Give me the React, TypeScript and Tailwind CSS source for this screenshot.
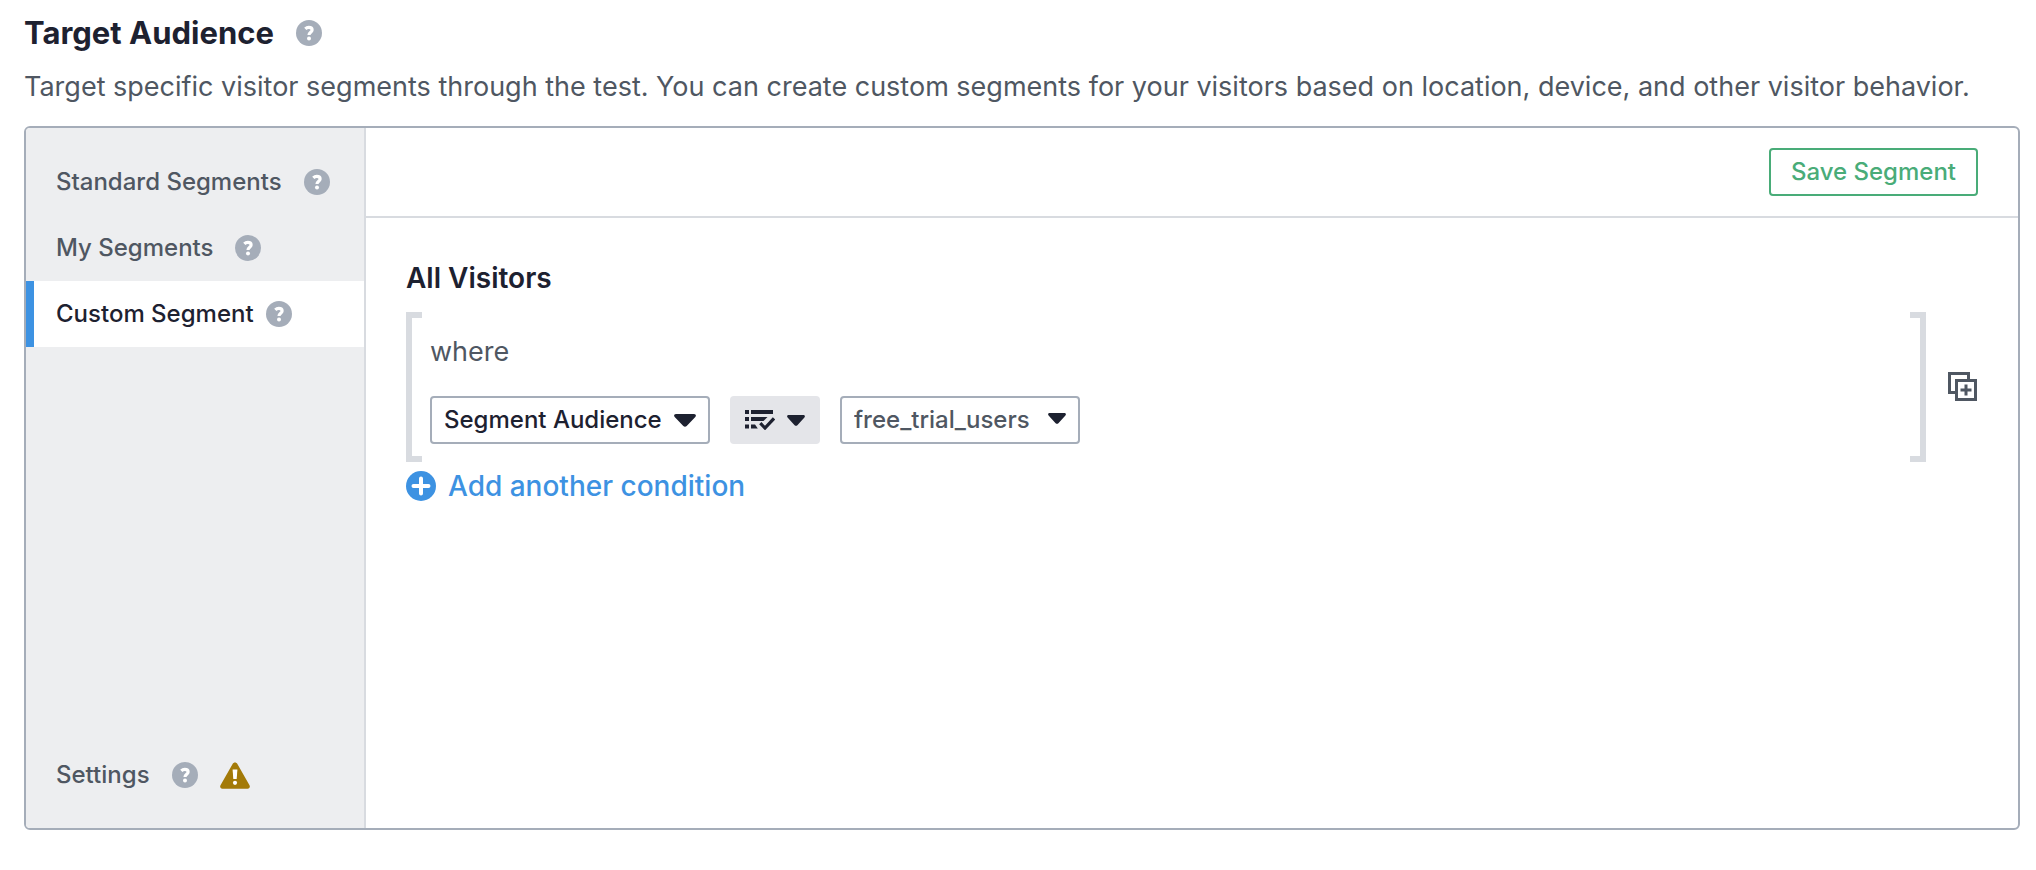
import { useState } from "react";

const tabs = [
  { id: "standard", label: "Standard Segments" },
  { id: "mine", label: "My Segments" },
  { id: "custom", label: "Custom Segment" },
];

function HelpButton({ topic }: { topic: string }) {
  return (
    <button
      type="button"
      aria-label={`Help: ${topic}`}
      className="flex size-[26px] shrink-0 items-center justify-center rounded-full bg-[#a5adb9] text-white"
    >
      <svg viewBox="0 0 26 26" className="size-full" aria-hidden="true">
        <path
          d="M9.3 8.9C10.3 7.9 11.4 7.4 12.8 7.4c2 0 3.3 1 3.3 2.6 0 2.2-3.1 2.3-3.1 5"
          fill="none"
          stroke="currentColor"
          strokeWidth="3.2"
        />
        <circle cx="13" cy="18.4" r="2" fill="currentColor" />
      </svg>
    </button>
  );
}

function Caret({ className }: { className: string }) {
  return (
    <svg
      viewBox="0 0 22 14"
      preserveAspectRatio="none"
      className={className}
      aria-hidden="true"
    >
      <path
        d="M2 0h18c1.8 0 2.5 1.9 1.3 3.1l-8.6 9.8c-1 1.1-2.4 1.1-3.4 0L.7 3.1C-.5 1.9.2 0 2 0Z"
        fill="#1d2130"
      />
    </svg>
  );
}

function ListCheckIcon() {
  return (
    <svg viewBox="0 0 30 20" className="h-5 w-[30px]" aria-hidden="true">
      <g fill="#1d2130">
        <path d="M0 0h4v4H0zM6 0h22v4H6zM0 7h4v4H0zM6 7h16.5l-4 4H6zM0 14.5h4v4H0zM6 14.5h4l2.8 4H6z" />
      </g>
      <path
        d="m15.3 13.2 4.7 4.8 9-9.6"
        fill="none"
        stroke="#1d2130"
        strokeWidth="3.2"
      />
    </svg>
  );
}

function WarningIcon() {
  return (
    <svg
      viewBox="0 0 30 27"
      className="h-[27px] w-[30px]"
      role="img"
      aria-label="Settings need attention"
    >
      <path
        d="M12.6 1.9c1-2 3.8-2 4.8 0l12.1 21.4c.9 1.7 0 3.4-1.9 3.4H2.4c-1.9 0-2.8-1.7-1.9-3.4Z"
        fill="#a37a08"
      />
      <path d="M12.6 7.4h4.8l-.7 9.6h-3.4z" fill="#fff" />
      <circle cx="15" cy="20.8" r="2.1" fill="#fff" />
    </svg>
  );
}

function DuplicateIcon() {
  return (
    <svg viewBox="0 0 30 30" className="size-[30px]" aria-hidden="true">
      <g fill="none" stroke="#4f5762" strokeWidth="3">
        <path d="M20.5 8V1.5h-19v19H8" />
        <path d="M8.5 8.5h19v19h-19z" />
        <path d="M18 12.5v11M12.5 18h11" />
      </g>
    </svg>
  );
}

function PlusCircleIcon() {
  return (
    <svg viewBox="0 0 30 30" className="size-[30px]" aria-hidden="true">
      <circle cx="15" cy="15" r="15" fill="#3d92e2" />
      <path
        d="M15 7.5v15M7.5 15h15"
        stroke="#fff"
        strokeWidth="4"
        strokeLinecap="round"
      />
    </svg>
  );
}

export default function App() {
  const [active, setActive] = useState("custom");

  return (
    <main className="px-6 pt-2 pr-4 pb-10 font-['Inter',sans-serif] text-[#4f5762]">
      <div className="flex items-center gap-[22px]">
        <h1 className="text-[31px] leading-[50px] font-bold text-[#1d2130]">
          Target Audience
        </h1>
        <HelpButton topic="Target Audience" />
      </div>
      <p className="text-[27px] leading-[58px]">
        Target specific visitor segments through the test. You can create custom
        segments for your visitors based on location, device, and other visitor
        behavior.
      </p>

      <section
        aria-label="Target Audience"
        className="mt-[10px] flex min-h-[704px] overflow-hidden rounded-md border-2 border-[#a5adb9]"
      >
        <nav
          aria-label="Segments"
          className="flex w-[340px] shrink-0 flex-col border-r-2 border-[#d8dbe0] bg-[#edeef0] pt-[21px] pb-5 text-2xl font-medium"
        >
          {tabs.map((tab) => (
            <div
              key={tab.id}
              className={`flex h-[66px] items-center border-l-8 pl-[22px] ${
                tab.id === active
                  ? "gap-3 border-[#3d92e2] bg-white text-[#1d2130]"
                  : "gap-[22px] border-transparent"
              }`}
            >
              <button type="button" onClick={() => setActive(tab.id)}>
                {tab.label}
              </button>
              <HelpButton topic={tab.label} />
            </div>
          ))}
          <div className="mt-auto flex h-[66px] items-center gap-[22px] border-l-8 border-transparent pl-[22px]">
            <button type="button">Settings</button>
            <HelpButton topic="Settings" />
            <WarningIcon />
          </div>
        </nav>

        <div className="min-w-0 flex-1">
          <div className="flex justify-end border-b-2 border-[#d8dbe0] px-10 py-5">
            <button
              type="button"
              className="h-12 rounded border-2 border-[#49ac78] px-5 text-2xl font-medium text-[#49ac78]"
            >
              Save Segment
            </button>
          </div>

          <div className="px-10 py-10">
            <h2 className="text-[28px] leading-10 font-semibold text-[#1d2130]">
              All Visitors
            </h2>

            <div className="mt-[14px] flex items-center gap-[22px]">
              <div className="flex min-w-0 flex-1">
                <div className="w-4 shrink-0 border-6 border-r-0 border-[#d8dbe0]" />
                <div className="flex-1 px-2 py-[18px]">
                  <p className="text-[27px] leading-[44px]">where</p>
                  <div className="mt-[22px] flex gap-5">
                    <div className="relative">
                      <select
                        aria-label="Attribute"
                        className="h-12 appearance-none rounded border-2 border-[#a5adb9] bg-white pr-[46px] pl-3 text-2xl font-medium text-[#1d2130]"
                      >
                        <option>Segment Audience</option>
                      </select>
                      <Caret className="pointer-events-none absolute top-[18px] right-[14px] h-[13px] w-[22px]" />
                    </div>
                    <button
                      type="button"
                      aria-label="Operator: is in list"
                      aria-haspopup="listbox"
                      className="flex h-12 items-center gap-3 rounded bg-[#e4e5e9] px-[15px]"
                    >
                      <ListCheckIcon />
                      <Caret className="h-[11px] w-[18px]" />
                    </button>
                    <div className="relative">
                      <select
                        aria-label="Value"
                        className="h-12 appearance-none rounded border-2 border-[#a5adb9] bg-white pr-12 pl-3 text-2xl font-medium text-[#4f5762]"
                      >
                        <option>free_trial_users</option>
                      </select>
                      <Caret className="pointer-events-none absolute top-[17px] right-[14px] h-[11px] w-[18px]" />
                    </div>
                  </div>
                </div>
                <div className="w-4 shrink-0 border-6 border-l-0 border-[#d8dbe0]" />
              </div>
              <button type="button" aria-label="Duplicate group">
                <DuplicateIcon />
              </button>
            </div>

            <button
              type="button"
              className="mt-1 flex items-center gap-3 text-[28px] leading-10 font-medium text-[#3d92e2]"
            >
              <PlusCircleIcon />
              Add another condition
            </button>
          </div>
        </div>
      </section>
    </main>
  );
}
